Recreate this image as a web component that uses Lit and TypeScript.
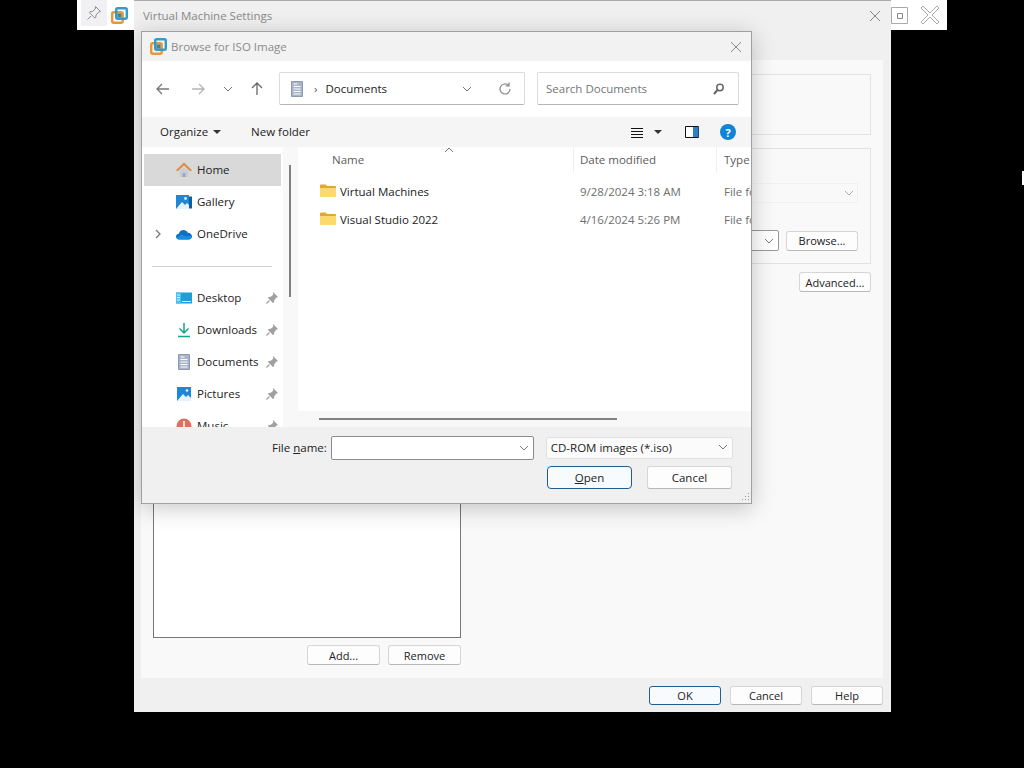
import { LitElement, html, css, svg } from 'lit';
import { customElement } from 'lit/decorators.js';

const logo = html`<svg width="17" height="17" viewBox="0 0 17 17">
  <rect x="1.200" y="5.200" width="10.500" height="10.600" rx="1.500" fill="none" stroke="#e8973a" stroke-width="2.400" />
  <rect x="5.200" y="1.200" width="10.600" height="10.500" rx="1.500" fill="none" stroke="#2a9fc9" stroke-width="2.400" />
  <rect x="6.400" y="6.400" width="4.200" height="4.200" fill="#4f7f8f" />
</svg>`;

const icon = (body: unknown, w = 16, h = 16) =>
  html`<svg width=${w} height=${h} viewBox="0 0 ${w} ${h}">${body}</svg>`;

const pin = icon(
  svg`<path d="M8 1l5 5-1.800.8-2 2.400-.2 2.300-1 .5-5-5 .6-1 2.200-.2 2.400-2z" fill="#a0a0a0" /><path d="M4.500 9.500L1.500 12.500" stroke="#a0a0a0" stroke-width="1.300" />`,
  14,
  14,
);

const pinOutline = icon(
  svg`<path d="M9.500 1.500l5 5-2 .8-2.500 2.700-.2 2.500-1 .5-5.300-5.300.5-1 2.500-.2 2.700-2.500z" fill="none" stroke="#8c8c8c" /><path d="M5 11L1.500 14.500" stroke="#8c8c8c" />`,
);

const docIcon = svg`<path d="M2.500 0.500h11v15h-11z" fill="#a9b4c8" stroke="#8e99ae" /><path d="M4.500 3h4M4.500 5.500h7M4.500 8h7M4.500 10.500h7M4.500 13h7" stroke="#fff" />`;

const navIcons: Record<string, unknown> = {
  home: icon(svg`<path d="M3.500 8.500v6.500h9V8.500L8 4.500z" fill="#c9ced6" /><path d="M6.500 15v-4h3v4" fill="#a0a6b0" /><path d="M.8 8.800L8 2l7.200 6.800" fill="none" stroke="#e08b45" stroke-width="2" />`),
  gallery: icon(svg`<path d="M0 1h13v14H0z" fill="#1f87d6" /><path d="M13 2.500h3v12h-3z" fill="#0f5fa6" /><path d="M0 15l6-7 3 3 2-2 2 2v4z" fill="#e6f3fc" /><circle cx="9.500" cy="4.500" r="1.400" fill="#e6f3fc" />`),
  cloud: icon(svg`<path d="M3.500 13.500C1.500 13.500 0 12.200 0 10.600c0-1.500 1.200-2.600 2.800-2.800C3.400 5.600 5.200 4 7.500 4c2 0 3.600 1.100 4.300 2.800 2.300 0 4.200 1.600 4.200 3.600 0 1.800-1.500 3.100-3.500 3.100z" fill="#0f6fc6" /><path d="M0.400 12l5-3.500 5 2 5.400-.8c-.2 2.200-1.500 3.800-3.300 3.800H3.500C2 13.500.9 13 .4 12z" fill="#1490df" />`),
  desktop: icon(svg`<path d="M0 2.500h16v11H0z" fill="#1f9fd8" /><path d="M0 2.500h5v11H0z" fill="#4cc2e8" /><path d="M1 5h3M1 7.500h3M1 10h3M6 11.500h9" stroke="#d7f1fa" />`),
  download: icon(svg`<path d="M8 1v9.500M3.500 6.500L8 11l4.500-4.500M2 14.500h12" fill="none" stroke="#17a589" stroke-width="1.500" />`),
  docs: icon(docIcon),
  pictures: icon(svg`<path d="M1 1h14v14H1z" fill="#1f87d6" /><path d="M1 15l6-7 3 3 2-2 3 3v3z" fill="#e6f3fc" /><circle cx="11" cy="4.500" r="1.300" fill="#e6f3fc" />`),
  music: icon(svg`<circle cx="8" cy="8" r="7.500" fill="#d9735c" /><path d="M8 3v8" stroke="#fff" stroke-width="1.500" />`),
};

const folder = icon(svg`<path d="M0 2.500a1 1 0 0 1 1-1h4.500l1.500 1.500h8a1 1 0 0 1 1 1v1H0z" fill="#e0a82e" /><path d="M0 5h16v8a1 1 0 0 1-1 1H1a1 1 0 0 1-1-1z" fill="#fcd96b" />`);

const chevDown = html`<svg width="10" height="6" viewBox="0 0 10 6"><path d="M1 1l4 4 4-4" fill="none" stroke="#777" /></svg>`;

@customElement('app-root')
export class AppRoot extends LitElement {
  static styles = css`
    :host {
      display: block;
      position: relative;
      width: 1024px;
      height: 768px;
      overflow: hidden;
      background: #000;
      font-family: 'Open Sans', 'Noto Sans', sans-serif;
      font-size: 11.5px;
      color: #222;
    }
    svg { display: block; flex: none; }

    /* desktop windows */
    .strip {
      position: absolute;
      left: 77px;
      top: 0;
      width: 870px;
      height: 30px;
      background: #fff;
      display: flex;
      align-items: center;
      justify-content: space-between;
      padding: 0 7px 0 4px;
      box-sizing: border-box;
    }
    .strip-left { display: flex; align-items: center; gap: 4px; }
    .strip-right { display: flex; align-items: center; gap: 12px; }
    .pin-btn {
      width: 26px;
      height: 26px;
      margin-bottom: 4px;
      background: #f1f1f3;
      display: flex;
      align-items: center;
      justify-content: center;
    }
    .cursor {
      position: absolute;
      left: 1022px;
      top: 171px;
      width: 2px;
      height: 14px;
      background: #fff;
    }

    .settings {
      position: absolute;
      left: 134px;
      top: 0;
      width: 757px;
      height: 712px;
      background: #f0f0f0;
      border-top: 1px solid #aaa;
      box-sizing: border-box;
      display: flex;
      flex-direction: column;
    }
    .settings-title {
      height: 29px;
      display: flex;
      align-items: center;
      justify-content: space-between;
      padding: 0 10px 0 9px;
      color: #8a8a8a;
      flex: none;
    }
    .panel {
      flex: 1;
      margin: 30px 8px 0 7px;
      background: #f9f9f9;
      padding: 14px 12px 13px 12px;
      display: grid;
      grid-template-columns: 308px 1fr;
      gap: 14px;
      min-height: 0;
    }
    .col-left { display: flex; flex-direction: column; min-height: 0; }
    .listbox {
      flex: 1;
      background: #fff;
      border: 1px solid #777;
    }
    .list-actions {
      display: flex;
      justify-content: flex-end;
      gap: 8px;
      margin-top: 7px;
    }
    .list-actions .btn { width: 73px; }
    .col-right { display: flex; flex-direction: column; align-items: flex-end; }
    .group {
      width: 100%;
      box-sizing: border-box;
      border: 1px solid #e2e2e2;
    }
    .group-a { height: 61px; margin-bottom: 13px; }
    .group-b {
      height: 116px;
      margin-bottom: 8px;
      display: flex;
      flex-direction: column;
      align-items: flex-end;
      padding: 34px 12px 0 0;
    }
    .combo-off {
      width: 200px;
      height: 20px;
      border: 1px solid #ececec;
      display: flex;
      align-items: center;
      justify-content: flex-end;
      padding-right: 3px;
      box-sizing: border-box;
      opacity: 0.6;
    }
    .browse-row { display: flex; align-items: center; gap: 7px; margin-top: 27px; }
    .combo {
      width: 200px;
      height: 21px;
      border: 1px solid #999;
      border-radius: 2px;
      background: #fff;
      display: flex;
      align-items: center;
      justify-content: flex-end;
      padding-right: 4px;
      box-sizing: border-box;
    }
    .btn {
      box-sizing: border-box;
      height: 20px;
      width: 72px;
      background: #fdfdfd;
      border: 1px solid #d6d6d6;
      border-bottom-color: #b8b8b8;
      border-radius: 3px;
      display: flex;
      align-items: center;
      justify-content: center;
      font-size: 11px;
      color: #222;
    }
    .btn.primary { border: 1px solid #1f5f8f; background: #f8fbfd; }
    .foot {
      flex: none;
      height: 34px;
      display: flex;
      justify-content: flex-end;
      align-items: center;
      gap: 9px;
      padding: 0 8px 0 0;
    }
    .foot .btn { height: 19px; }

    /* file dialog */
    .dialog {
      position: absolute;
      left: 141px;
      top: 31px;
      width: 611px;
      height: 473px;
      box-sizing: border-box;
      background: #f0f0f0;
      border: 1px solid #a0a0a0;
      box-shadow: 0 4px 22px rgba(0, 0, 0, 0.22);
      display: flex;
      flex-direction: column;
    }
    .dlg-title {
      flex: none;
      height: 29px;
      display: flex;
      align-items: center;
      gap: 4px;
      padding: 0 9px 0 8px;
      color: #8a8a8a;
      background: #f2f2f2;
    }
    .dlg-title span { flex: 1; }
    .nav {
      flex: none;
      height: 56px;
      background: #fff;
      display: flex;
      align-items: center;
      padding: 0 12px 1px 13px;
      box-sizing: border-box;
    }
    .nav-btns { display: flex; align-items: center; width: 124px; flex: none; }
    .nav-btns > div { display: flex; justify-content: center; flex: none; }
    .nav-btns .back { width: 16px; }
    .nav-btns .fwd { width: 54px; }
    .nav-btns .hist { width: 6px; }
    .nav-btns .up { width: 48px; margin-left: 2px; }
    .address, .search {
      height: 33px;
      box-sizing: border-box;
      border: 1px solid #dcdcdc;
      border-bottom-color: #b5b5b5;
      border-radius: 2px;
      display: flex;
      align-items: center;
    }
    .address { width: 246px; padding: 0 11px 0 9px; margin-right: 12px; }
    .address .sep { margin: 0 8px 0 9px; color: #555; }
    .address .path { flex: 1; }
    .address .refresh { margin-left: 25px; }
    .search { width: 202px; padding: 0 13px 0 8px; justify-content: space-between; color: #757575; }
    .tools {
      flex: none;
      height: 30px;
      background: #f5f5f5;
      display: flex;
      align-items: center;
      padding: 0 15px 0 18px;
    }
    .tools > span, .organize span { padding-bottom: 2px; }
    .caret {
      width: 0;
      height: 0;
      border: 4px solid transparent;
      border-top: 4px solid #333;
      border-bottom: 0;
    }
    .organize { display: flex; align-items: center; gap: 5px; margin-right: 30px; }
    .tools .grow { flex: 1; }
    .tools .views { display: flex; align-items: center; gap: 11px; margin-right: 23px; }
    .tools .pane { margin-right: 21px; }
    .help {
      width: 16px;
      height: 16px;
      border-radius: 50%;
      background: #1383d6;
      color: #fff;
      font-weight: 700;
      font-size: 11px;
      display: flex;
      align-items: center;
      justify-content: center;
    }
    .body { flex: 1; display: flex; min-height: 0; background: #fff; }
    .side { width: 141px; flex: none; overflow: hidden; padding-top: 7px; box-sizing: border-box; }
    .side-row {
      height: 32px;
      margin-left: 2px;
      width: 137px;
      display: flex;
      align-items: center;
      position: relative;
      flex: none;
    }
    .side-row.active { background: #d9d9d9; }
    .side-row .chev { width: 32px; display: flex; justify-content: center; padding-right: 4px; box-sizing: border-box; }
    .side-row .label { margin-left: 5px; flex: 1; padding-bottom: 2px; }
    .side-row .pin { margin-right: 2px; }
    .side-gap { height: 32px; display: flex; align-items: center; padding-left: 10px; }
    .side-gap div { width: 120px; height: 1px; background: #d2d2d2; }
    .gutter { width: 15px; flex: none; background: #f8f8f8; padding: 18px 0 0 6px; box-sizing: border-box; }
    .thumb { width: 2px; height: 132px; background: #808080; }
    .files { flex: 1; display: flex; flex-direction: column; min-width: 0; position: relative; }
    .list { flex: 1; overflow: hidden; min-height: 0; }
    .sort { position: absolute; left: 146px; top: 0; }
    .thead {
      height: 25px;
      margin-bottom: 5px;
      display: grid;
      grid-template-columns: 276px 143px 1fr;
      color: #5c5c5c;
    }
    .thead div { display: flex; align-items: center; padding-left: 6px; border-right: 1px solid #efefef; white-space: nowrap; overflow: hidden; }
    .thead div:first-child { padding-left: 34px; }
    .thead div:last-child { border-right: 0; padding-left: 7px; }
    .row {
      height: 28px;
      display: grid;
      grid-template-columns: 276px 143px 1fr;
      align-items: center;
      color: #6e6e6e;
    }
    .row > div { padding-left: 6px; white-space: nowrap; overflow: hidden; }
    .row > div:last-child { padding-left: 7px; }
    .row .name { display: flex; align-items: center; gap: 4px; padding-left: 22px; color: #222; }
    .hbar { flex: none; height: 16px; background: #f8f8f8; padding: 7px 0 0 21px; box-sizing: border-box; }
    .hbar div { width: 298px; height: 2px; background: #808080; }
    .dlg-foot {
      flex: none;
      height: 76px;
      position: relative;
      padding: 9px 17px 0 130px;
      box-sizing: border-box;
      display: flex;
      flex-direction: column;
    }
    .name-row { display: flex; align-items: center; }
    .name-row label { margin-right: 4px; white-space: nowrap; padding-bottom: 2px; }
    .name-row u { text-decoration: underline; }
    .input {
      width: 203px;
      height: 24px;
      box-sizing: border-box;
      background: #fff;
      border: 1px solid #8c8c8c;
      border-radius: 2px;
      display: flex;
      align-items: center;
      justify-content: flex-end;
      padding-right: 4px;
      margin-right: 12px;
    }
    .filter {
      width: 187px;
      height: 22px;
      box-sizing: border-box;
      background: #fbfbfb;
      border: 1px solid #e0e0e0;
      border-radius: 2px;
      display: flex;
      align-items: center;
      justify-content: space-between;
      padding: 0 4px 2px 4px;
    }
    .dlg-btns { display: flex; justify-content: flex-end; gap: 15px; margin-top: 6px; padding-right: 2px; }
    .dlg-btns .btn { width: 85px; height: 23px; font-size: 11.5px; }
    .dlg-btns .btn.primary { border-radius: 4px; }
    .grip { position: absolute; right: 1px; bottom: 1px; }
  `;

  render() {
    const places = [
      { id: 'home', label: 'Home', active: true },
      { id: 'gallery', label: 'Gallery' },
      { id: 'cloud', label: 'OneDrive', expand: true },
      { gap: true },
      { id: 'desktop', label: 'Desktop', pinned: true },
      { id: 'download', label: 'Downloads', pinned: true },
      { id: 'docs', label: 'Documents', pinned: true },
      { id: 'pictures', label: 'Pictures', pinned: true },
      { id: 'music', label: 'Music', pinned: true },
    ];
    const files = [
      { name: 'Virtual Machines', date: '9/28/2024 3:18 AM' },
      { name: 'Visual Studio 2022', date: '4/16/2024 5:26 PM' },
    ];
    return html`
      <div class="strip">
        <div class="strip-left">
          <div class="pin-btn">${pinOutline}</div>
          ${logo}
        </div>
        <div class="strip-right">
          <svg width="17" height="17" viewBox="0 0 17 17"><path d="M.5.5h16v16H.5z" fill="none" stroke="#aaa" /><path d="M6.500 6.500h5v5h-5z" fill="none" stroke="#888" /></svg>
          <svg width="20" height="20" viewBox="0 0 20 20"><path d="M3 1l7 7 7-7 2 2-7 7 7 7-2 2-7-7-7 7-2-2 7-7-7-7z" fill="#fff" stroke="#aaa" /></svg>
        </div>
      </div>
      <div class="cursor"></div>

      <div class="settings">
        <div class="settings-title">
          <span>Virtual Machine Settings</span>
          <svg width="12" height="12" viewBox="0 0 12 12"><path d="M1 1l10 10M11 1L1 11" stroke="#888" /></svg>
        </div>
        <div class="panel">
          <div class="col-left">
            <div class="listbox"></div>
            <div class="list-actions">
              <div class="btn">Add...</div>
              <div class="btn">Remove</div>
            </div>
          </div>
          <div class="col-right">
            <div class="group group-a"></div>
            <div class="group group-b">
              <div class="combo-off">${chevDown}</div>
              <div class="browse-row">
                <div class="combo">${chevDown}</div>
                <div class="btn">Browse...</div>
              </div>
            </div>
            <div class="btn">Advanced...</div>
          </div>
        </div>
        <div class="foot">
          <div class="btn primary">OK</div>
          <div class="btn">Cancel</div>
          <div class="btn">Help</div>
        </div>
      </div>

      <div class="dialog">
        <div class="dlg-title">
          ${logo}
          <span>Browse for ISO Image</span>
          <svg width="12" height="12" viewBox="0 0 12 12"><path d="M1 1l10 10M11 1L1 11" stroke="#888" /></svg>
        </div>
        <div class="nav">
          <div class="nav-btns">
            <div class="back">${icon(svg`<path d="M14 8H2M7 3L2 8l5 5" fill="none" stroke="#777" stroke-width="1.300" />`)}</div>
            <div class="fwd">${icon(svg`<path d="M2 8h12M9 3l5 5-5 5" fill="none" stroke="#b5b5b5" stroke-width="1.300" />`)}</div>
            <div class="hist">${chevDown}</div>
            <div class="up">${icon(svg`<path d="M8 14V2M3 7l5-5 5 5" fill="none" stroke="#666" stroke-width="1.300" />`)}</div>
          </div>
          <div class="address">
            ${icon(docIcon)}
            <span class="sep">›</span>
            <span class="path">Documents</span>
            ${chevDown}
            <span class="refresh">${icon(svg`<path d="M13 8a5 5 0 1 1-1.600-3.700M12 1.500V5H8.500" fill="none" stroke="#888" stroke-width="1.200" />`, 16, 16)}</span>
          </div>
          <div class="search">
            <span>Search Documents</span>
            ${icon(svg`<circle cx="8" cy="5.500" r="3.200" fill="none" stroke="#666" stroke-width="1.500" /><path d="M5.500 8L2 12" stroke="#666" stroke-width="2" />`, 13, 13)}
          </div>
        </div>
        <div class="tools">
          <div class="organize"><span>Organize</span><div class="caret"></div></div>
          <span>New folder</span>
          <div class="grow"></div>
          <div class="views">
            ${icon(svg`<path d="M0 2.500h12M0 5.500h12M0 8.500h12M0 11.500h12" stroke="#111" />`, 12, 13)}
            <div class="caret"></div>
          </div>
          <div class="pane">${icon(svg`<path d="M.5 1.500h13v11H.5z" fill="#fff" stroke="#111" /><path d="M8 2h5.500v10H8z" fill="#2f7fc4" />`, 14, 14)}</div>
          <div class="help">?</div>
        </div>
        <div class="body">
          <div class="side">
            ${places.map((p) =>
              p.gap
                ? html`<div class="side-gap"><div></div></div>`
                : html`<div class="side-row ${p.active ? 'active' : ''}">
                    <div class="chev">
                      ${p.expand
                        ? html`<svg width="6" height="10" viewBox="0 0 6 10"><path d="M1 1l4 4-4 4" fill="none" stroke="#777" stroke-width="1.300" /></svg>`
                        : ''}
                    </div>
                    ${navIcons[p.id as string]}
                    <span class="label">${p.label}</span>
                    ${p.pinned ? html`<span class="pin">${pin}</span>` : ''}
                  </div>`,
            )}
          </div>
          <div class="gutter"><div class="thumb"></div></div>
          <div class="files">
            <div class="list">
              <div class="sort"><svg width="10" height="6" viewBox="0 0 10 6"><path d="M1 5l4-4 4 4" fill="none" stroke="#777" /></svg></div>
              <div class="thead">
                <div>Name</div>
                <div>Date modified</div>
                <div>Type</div>
              </div>
              ${files.map(
                (f) => html`<div class="row">
                  <div class="name">${folder}<span>${f.name}</span></div>
                  <div>${f.date}</div>
                  <div>File folder</div>
                </div>`,
              )}
            </div>
            <div class="hbar"><div></div></div>
          </div>
        </div>
        <div class="dlg-foot">
          <div class="name-row">
            <label>File <u>n</u>ame:</label>
            <div class="input">${chevDown}</div>
            <div class="filter"><span>CD-ROM images (*.iso)</span>${chevDown}</div>
          </div>
          <div class="dlg-btns">
            <div class="btn primary"><span><u>O</u>pen</span></div>
            <div class="btn">Cancel</div>
          </div>
          <svg class="grip" width="10" height="10" viewBox="0 0 10 10"><path d="M8 1h1v1H8zM5 4h1v1H5zM8 4h1v1H8zM2 7h1v1H2zM5 7h1v1H5zM8 7h1v1H8z" fill="#999" /></svg>
        </div>
      </div>
    `;
  }
}
